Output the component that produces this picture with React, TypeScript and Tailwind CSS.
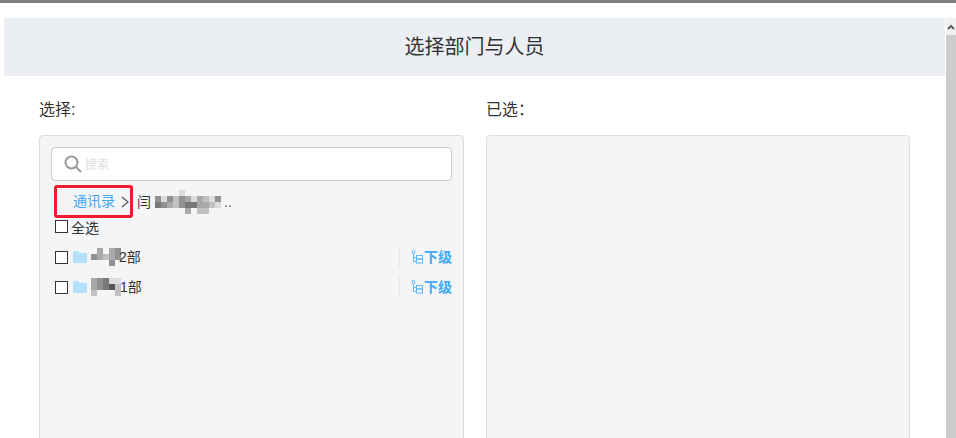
import React from "react";

const font = { fontFamily: '"Liberation Sans", "Noto Sans CJK SC", sans-serif' };

function Mosaic({ cols, size, rows, className }: { cols: number; size: number; rows: string[]; className?: string }) {
  const shades: Record<string, string> = {
    a: "#dcdcde", b: "#c0c1c3", c: "#a8a9ab", d: "#909193", e: "#78797b", f: "#56575a", g: "#d0d1d3",
  };
  return (
    <svg width={cols * size} height={rows.length * size} className={className} shapeRendering="crispEdges">
      {rows.map((r, y) =>
        r.split("").map((c, x) => (c === "." ? null : <rect key={`${x}-${y}`} x={x * size} y={y * size} width={size} height={size} fill={shades[c]} />))
      )}
    </svg>
  );
}

function Folder() {
  return (
    <svg width="14" height="12" viewBox="0 0 14 12" className="shrink-0">
      <path d="M0 1.500C0 .7.600 0 1.400 0h3.400l1.400 1.800h6.400c.8 0 1.400.6 1.400 1.400v7.400c0 .8-.6 1.400-1.400 1.400H1.400C.6 12 0 11.400 0 10.600Z" fill="#b3e0fb" />
    </svg>
  );
}

function Tree() {
  return (
    <svg width="12" height="14" viewBox="0 0 12 14" fill="none" stroke="#5db8f5" strokeWidth="1" className="shrink-0">
      <circle cx="2.500" cy="2" r="1.500" />
      <path d="M2.500 3.500V11.500H5.500M2.500 7.500H5.500" />
      <rect x="5.500" y="5.500" width="6" height="3.500" />
      <rect x="5.500" y="9" width="6" height="4" />
    </svg>
  );
}

function Row({ mosaic, label }: { mosaic: React.ReactNode; label: string }) {
  return (
    <div className="h-[30px] flex items-center">
      <span className="w-[13px] h-[13px] border border-[#333] bg-white ml-[4px] mr-[5px] shrink-0" />
      <Folder />
      <span className="ml-[4px] flex items-center text-[14px] text-[#333] leading-none">
        {mosaic}
        {label}
      </span>
      <div className="ml-auto flex items-center h-[20px] border-l border-[#e6e7ea] pl-[11px]">
        <Tree />
        <span className="text-[14px] font-bold text-[#3fa9f5] ml-[1px]">下级</span>
      </div>
    </div>
  );
}

export default function App() {
  return (
    <div className="w-[956px] h-[438px] overflow-hidden bg-white flex flex-col" style={font}>
      <div className="h-[3px] bg-[#808080] shrink-0" />
      <div className="flex flex-1 pt-[15px] min-h-0">
        <div className="w-[946px] pl-[4px] pr-[1px] shrink-0">
          <div className="h-[58px] bg-[#ebeef3] flex items-center justify-center text-[20px] text-[#333]">选择部门与人员</div>
          <div className="flex pl-[35px] pt-[24px] gap-[22px]">
            <div className="w-[425px] shrink-0">
              <div className="h-[20px] leading-[20px] text-[16px] text-[#333] mb-[15px]">选择:</div>
              <div className="h-[400px] bg-[#f4f5f7] border border-[#dcdcdc] rounded-[4px] px-[11px] pt-[11px]">
                <div className="h-[34px] w-[401px] bg-white border border-[#ccc] rounded-[4px] flex items-center pl-[12px]">
                  <svg width="18" height="18" viewBox="0 0 18 18" fill="none" stroke="#9a9a9a" strokeWidth="2" className="shrink-0">
                    <circle cx="7.500" cy="7.500" r="6" />
                    <path d="M12 12L17 17" />
                  </svg>
                  <span className="ml-[3px] mt-[2px] text-[12px] text-[#e0e0e0]">搜索</span>
                </div>
                <div className="flex items-center mt-[4px] h-[33px]">
                  <div className="relative w-[79px] h-[33px] ml-[3px] border-[3px] border-[#ed1c2e] rounded-[3px] flex items-center pl-[16px] shrink-0">
                    <span className="text-[14px] text-[#3fa9f5] whitespace-nowrap">通讯录</span>
                  </div>
                  <svg width="10" height="12" viewBox="0 0 10 12" fill="none" stroke="#555" strokeWidth="1.200" className="-ml-[13px] shrink-0 relative">
                    <path d="M2 1L8 6L2 11" />
                  </svg>
                  <span className="ml-[7px] flex items-center text-[14px] text-[#333] leading-none">
                    闫
                    <Mosaic
                      cols={11}
                      size={6}
                      className="ml-[4px]"
                      rows={["....a......", "dadbdcacbad", "edcbdeeccba", ".....c.bb.."]}
                    />
                    <span className="text-[#555] ml-[3px]">..</span>
                  </span>
                </div>
                <div className="h-[20px] flex items-center">
                  <span className="w-[13px] h-[13px] border border-[#333] bg-white ml-[4px] mr-[3px] mb-[3px] shrink-0" />
                  <span className="text-[14px] text-[#333]">全选</span>
                </div>
                <div className="pt-[4px]">
                  <Row
                    label="2部"
                    mosaic={<Mosaic cols={5} size={6} className="-mr-[2px]" rows={[".c.cd", "dcbcd", "...d."]} />}
                  />
                  <Row
                    label="1部"
                    mosaic={<Mosaic cols={5} size={6} className="-mr-[1px]" rows={["cdeaa", "cdefb", "b...b"]} />}
                  />
                </div>
              </div>
            </div>
            <div className="w-[424px] shrink-0">
              <div className="h-[20px] leading-[20px] text-[16px] text-[#333] mb-[15px]">已选：</div>
              <div className="h-[400px] bg-[#f4f5f7] border border-[#dcdcdc] rounded-[4px]" />
            </div>
          </div>
        </div>
        <div className="w-[10px] bg-[#cccccc] flex flex-col shrink-0">
          <div className="h-[17px] bg-[#f0f0f0] flex items-center justify-center">
            <svg width="8" height="6" viewBox="0 0 8 6" fill="none" stroke="#606060" strokeWidth="2">
              <path d="M1 5L4 2L7 5" />
            </svg>
          </div>
        </div>
      </div>
    </div>
  );
}
